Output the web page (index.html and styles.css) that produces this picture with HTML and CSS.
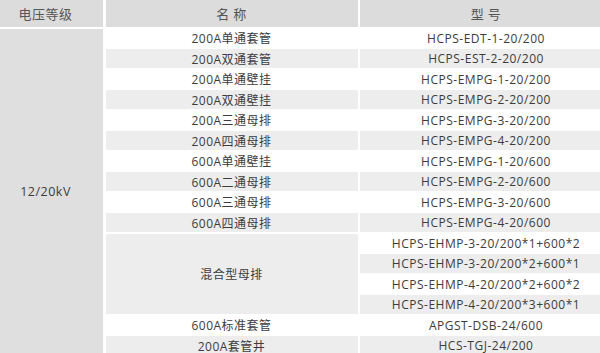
FILE: index.html
```html
<!DOCTYPE html>
<html lang="zh">
<head>
<meta charset="utf-8">
<link rel="stylesheet" href="styles.css">
</head>
<body>
<div class="spec">
  <div class="hd volt-hd">电压等级</div>
  <div class="hd">名&nbsp;称</div>
  <div class="hd m">型&nbsp;号</div>

  <div class="volt">12/20kV</div>

  <div class="c">200A单通套管</div><div class="c m">HCPS-EDT-1-20/200</div>
  <div class="c alt">200A双通套管</div><div class="c m alt">HCPS-EST-2-20/200</div>
  <div class="c">200A单通壁挂</div><div class="c m">HCPS-EMPG-1-20/200</div>
  <div class="c alt">200A双通壁挂</div><div class="c m alt">HCPS-EMPG-2-20/200</div>
  <div class="c">200A三通母排</div><div class="c m">HCPS-EMPG-3-20/200</div>
  <div class="c alt">200A四通母排</div><div class="c m alt">HCPS-EMPG-4-20/200</div>
  <div class="c">600A单通壁挂</div><div class="c m">HCPS-EMPG-1-20/600</div>
  <div class="c alt">600A二通母排</div><div class="c m alt">HCPS-EMPG-2-20/600</div>
  <div class="c">600A三通母排</div><div class="c m">HCPS-EMPG-3-20/600</div>
  <div class="c alt">600A四通母排</div><div class="c m alt">HCPS-EMPG-4-20/600</div>

  <div class="c alt mixed">混合型母排</div>
  <div class="c m">HCPS-EHMP-3-20/200*1+600*2</div>
  <div class="c m alt">HCPS-EHMP-3-20/200*2+600*1</div>
  <div class="c m">HCPS-EHMP-4-20/200*2+600*2</div>
  <div class="c m alt">HCPS-EHMP-4-20/200*3+600*1</div>

  <div class="c">600A标准套管</div><div class="c m">APGST-DSB-24/600</div>
  <div class="c alt">200A套管井</div><div class="c m alt">HCS-TGJ-24/200</div>
</div>
</body>
</html>
```

FILE: styles.css
```css
html, body {
  margin: 0;
  padding: 0;
  background: #ffffff;
}

.spec {
  display: grid;
  grid-template-columns: 103px 252px 1fr;
  grid-template-rows: 27.5px repeat(16, 19px);
  column-gap: 2.5px;
  row-gap: 1.5px;
  margin-top: -0.5px;
  font-family: "Open Sans", "Noto Sans CJK SC", sans-serif;
  font-size: 12px;
  letter-spacing: 0.5px;
  color: #3c3c3c;
}

.spec > div {
  display: flex;
  align-items: center;
  justify-content: center;
  white-space: nowrap;
}

.hd {
  background: #dcdcdc;
  font-family: "Noto Sans CJK SC", sans-serif;
  font-size: 13px;
  color: #555555;
  letter-spacing: 0.5px;
}

.volt-hd {
  padding-right: 12px;
}

.volt {
  grid-row: span 16;
  background: #dfdfdf;
  padding-right: 12px;
  font-size: 12.5px;
}

.c {
  background: #ffffff;
}

.c.alt {
  background: #ededed;
}

.m {
  padding-left: 12px;
}

.mixed {
  grid-row: span 4;
}
```
